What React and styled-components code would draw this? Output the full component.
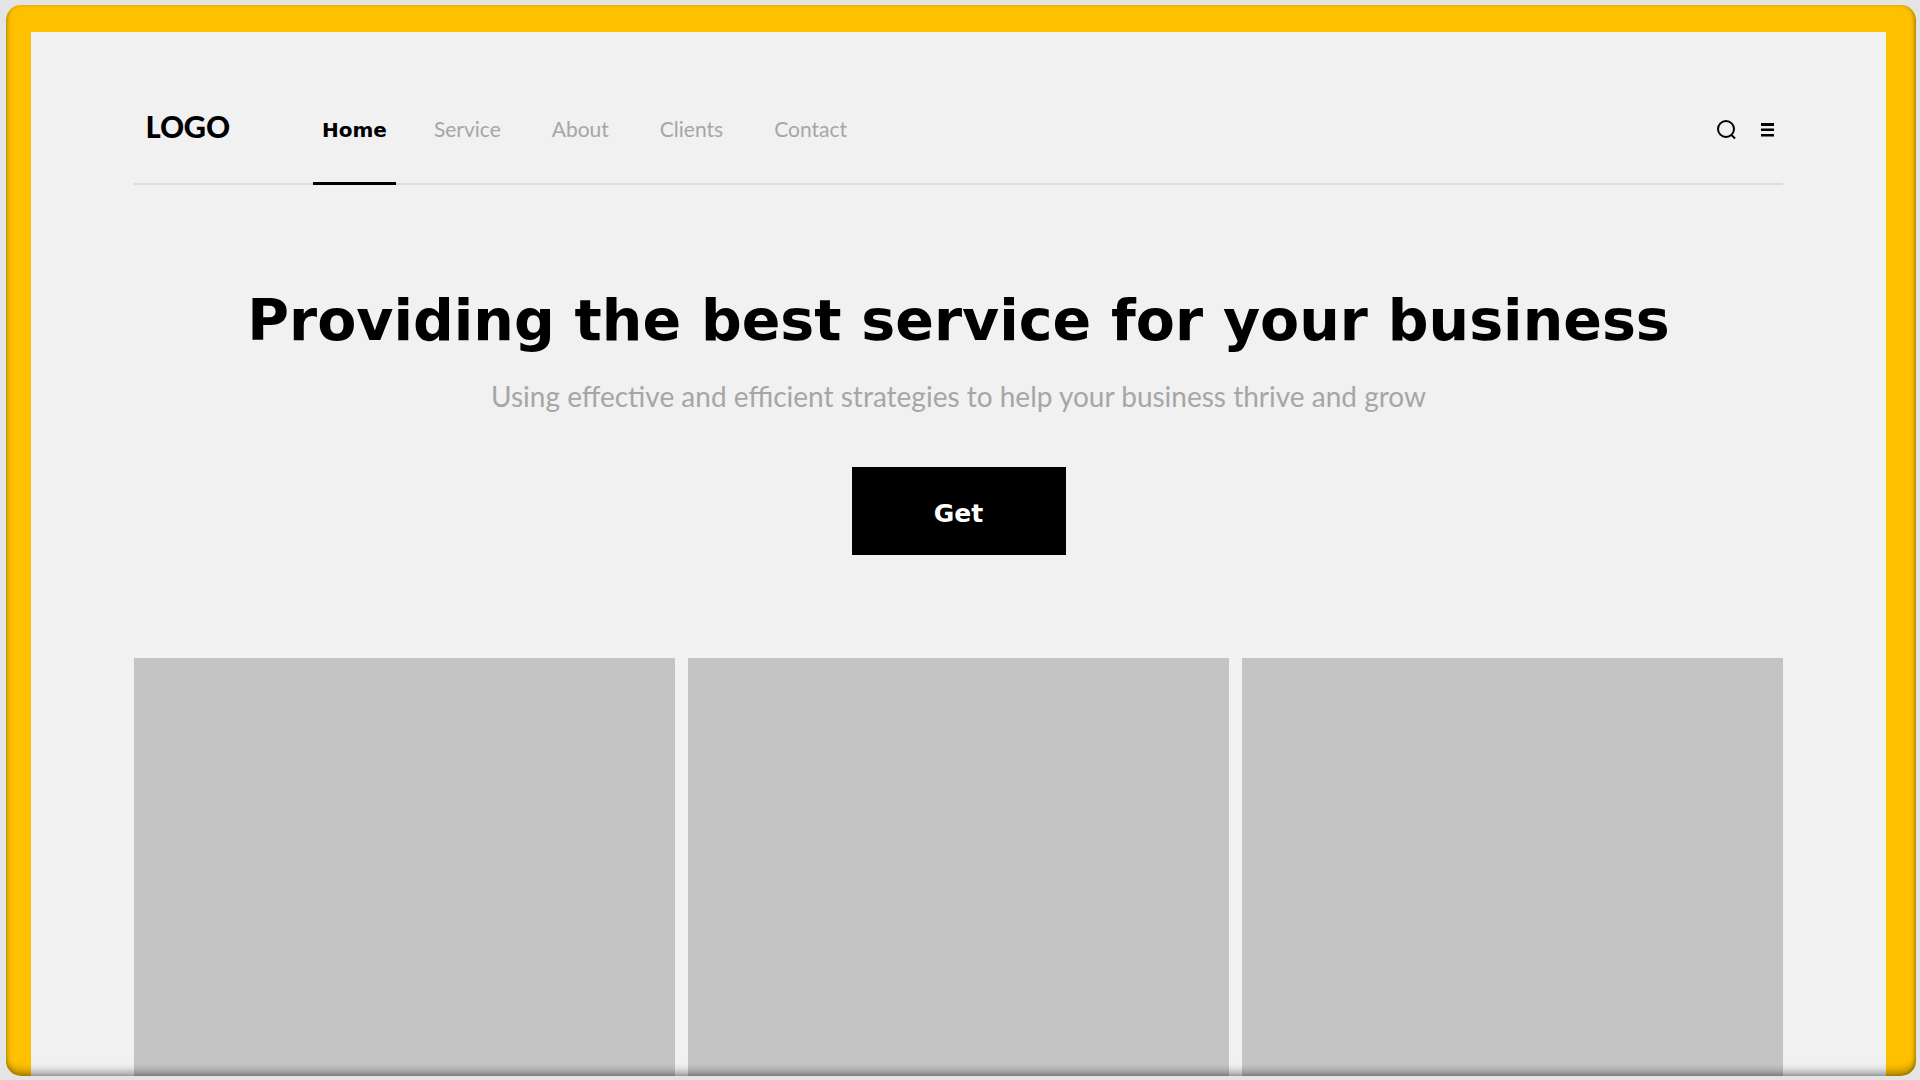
import React from "react";
import styled, { createGlobalStyle } from "styled-components";

const sans = '"Lato", sans-serif';
const logoFont = '"Carlito", "Lato", sans-serif';
const bold = '"DejaVu Sans", sans-serif';

const GlobalStyle = createGlobalStyle`
  *, *::before, *::after { box-sizing: border-box; }
  body { margin: 0; background: #e4e4e4; }
`;

const Page = styled.div`
  display: flex;
  min-height: 100vh;
  padding: 5px 4px 4px 6px;
`;

const Frame = styled.div`
  position: relative;
  display: flex;
  flex: 1;
  padding: 27px 30px 0 25px;
  border-radius: 15px;
  overflow: hidden;
  background: #ffc000;

  &::after {
    content: "";
    position: absolute;
    inset: 0;
    border-radius: inherit;
    pointer-events: none;
    box-shadow:
      inset 0 -8px 8px -4px rgba(0, 0, 0, 0.38),
      inset 3px 0 5px -3px rgba(0, 0, 0, 0.35),
      inset -3px 0 5px -3px rgba(0, 0, 0, 0.5);
  }
`;

const Screen = styled.div`
  display: flex;
  flex: 1;
  flex-direction: column;
  padding: 60px 103px 0;
  background: #f1f1f1;
`;

const Header = styled.header`
  display: flex;
  height: 93px;
  padding: 0 8px 0 12px;
  box-shadow: inset 0 -2px #dcdcdc;
`;

const Logo = styled.a`
  width: 167px;
  padding-top: 12px;
  color: #000;
  font: 700 35px/44px ${logoFont};
  text-decoration: none;
`;

const Nav = styled.nav`
  display: flex;
  flex: 1;
  gap: 38px;
`;

const NavLink = styled.a`
  padding: ${(p) => (p.$active ? "23px 9px 0" : "22px 13px 0 0")};
  border-bottom: 3px solid ${(p) => (p.$active ? "#000" : "transparent")};
  color: ${(p) => (p.$active ? "#000" : "#a6a6a6")};
  font: ${(p) => (p.$active ? `700 20px/30px ${bold}` : `400 21px/30px ${sans}`)};
  text-decoration: none;
`;

const Tools = styled.div`
  display: flex;
  align-items: flex-start;
  gap: 21px;
  padding-top: 26px;
`;

const IconButton = styled.button`
  display: flex;
  padding: 0;
  border: 0;
  background: none;
  color: #000;
  cursor: pointer;
`;

const Hero = styled.section`
  display: flex;
  flex-direction: column;
  align-items: center;
  padding: 100px 0 103px;
  text-align: center;
`;

const Title = styled.h1`
  margin: 0;
  color: #000;
  font: 700 57px/70px ${bold};
`;

const Subtitle = styled.p`
  margin: 22px 0 52px;
  color: #a6a6a6;
  font: 400 28px/38px ${sans};
`;

const Action = styled.button`
  width: 214px;
  height: 88px;
  padding: 6px 0 0;
  border: 0;
  background: #000;
  color: #fff;
  font: 700 25px/30px ${bold};
  cursor: pointer;
`;

const Cards = styled.section`
  display: grid;
  flex: 1;
  grid-template-columns: repeat(3, 1fr);
  gap: 13px;
`;

const Card = styled.article`
  background: #c4c4c4;
`;

const links = ["Home", "Service", "About", "Clients", "Contact"];

export default function App() {
  return (
    <>
      <GlobalStyle />
      <Page>
        <Frame>
          <Screen>
            <Header>
              <Logo href="#">LOGO</Logo>
              <Nav>
                {links.map((label, i) => (
                  <NavLink key={label} href="#" $active={i === 0}>
                    {label}
                  </NavLink>
                ))}
              </Nav>
              <Tools>
                <IconButton aria-label="Search">
                  <svg width="24" height="24" viewBox="0 0 24 24" fill="none" stroke="currentColor" strokeWidth="2">
                    <circle cx="11" cy="11" r="8" />
                    <path d="M16 16.500 20 20.500" />
                  </svg>
                </IconButton>
                <IconButton aria-label="Menu">
                  <svg width="15" height="24" viewBox="0 0 15 24" fill="currentColor">
                    <path d="M1 5h13v3H1zM1 10.500h13v2.500H1zM1 16h13v2.500H1z" />
                  </svg>
                </IconButton>
              </Tools>
            </Header>
            <Hero>
              <Title>Providing the best service for your business</Title>
              <Subtitle>Using effective and efficient strategies to help your business thrive and grow</Subtitle>
              <Action>Get</Action>
            </Hero>
            <Cards>
              <Card />
              <Card />
              <Card />
            </Cards>
          </Screen>
        </Frame>
      </Page>
    </>
  );
}
